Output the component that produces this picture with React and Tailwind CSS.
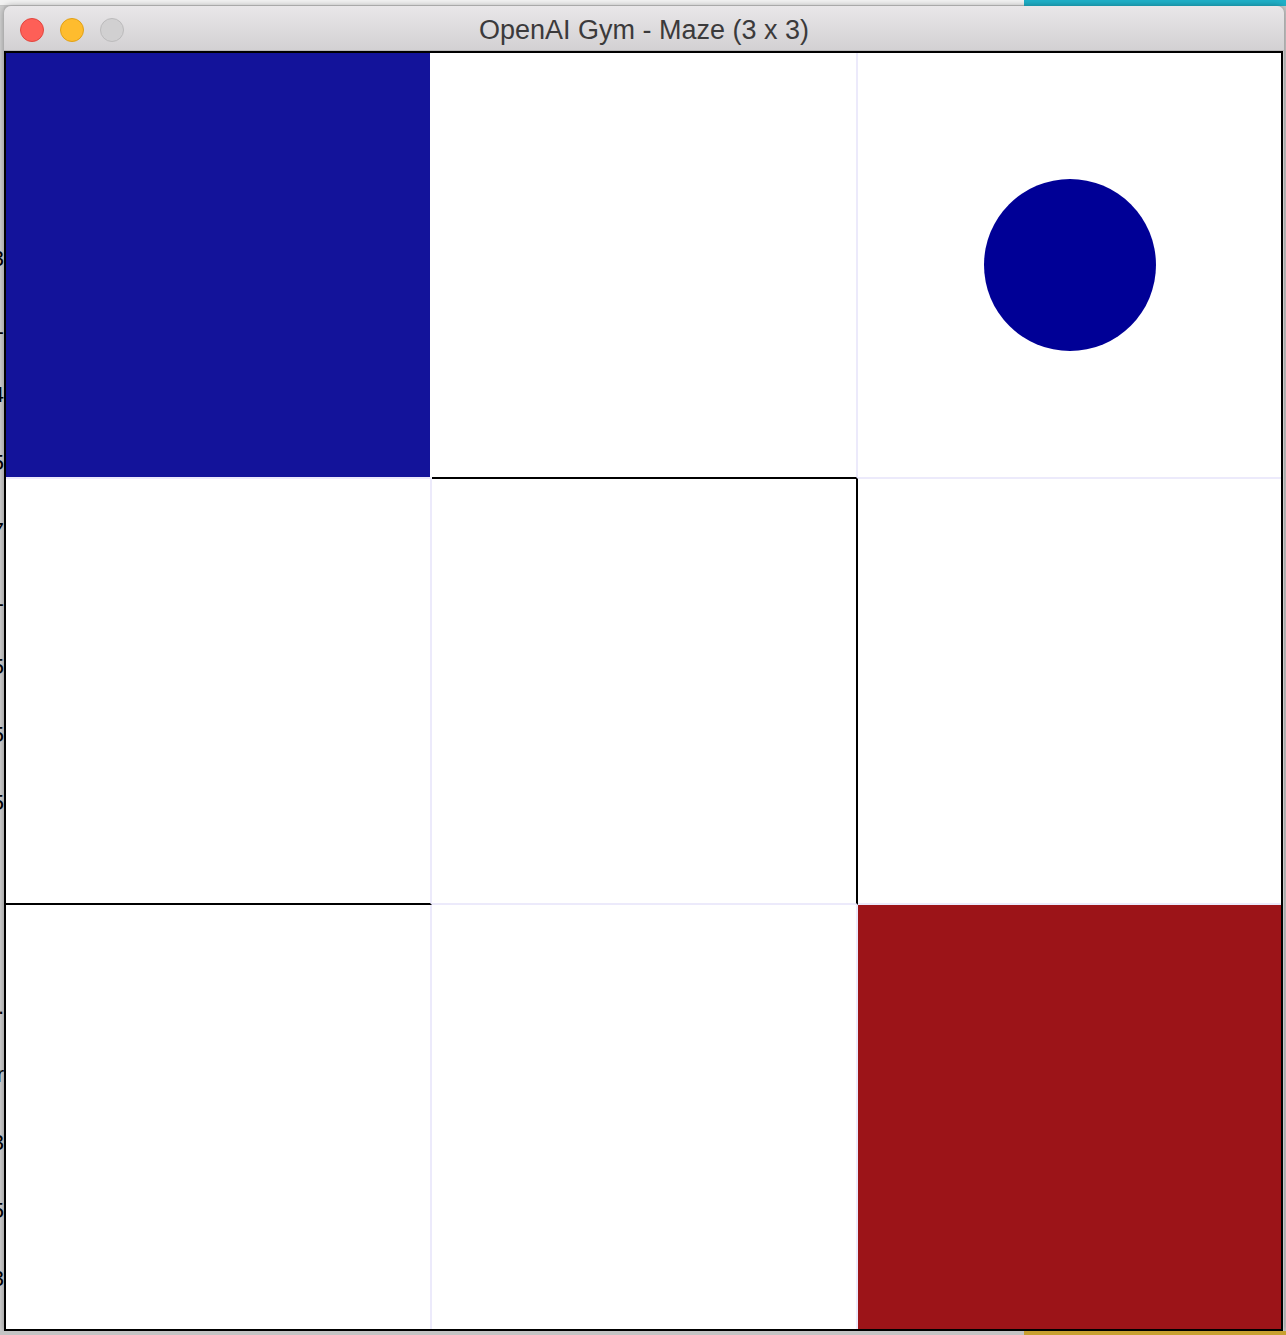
import React from "react";

// maze cells, row by row; border-b / border-r are the cell lines, black ones are walls
const cells = [
  { bg: "bg-[#13139a]", cls: "border-r-2 border-r-white border-b-2 border-b-[#eceafb]" },
  { bg: "bg-white", cls: "border-r-2 border-r-[#eceafb] border-b-2 border-b-black" },
  { bg: "bg-white", cls: "border-b-2 border-b-[#eceafb]", dot: true },
  { bg: "bg-white", cls: "border-r-2 border-r-[#eceafb] border-b-2 border-b-black" },
  { bg: "bg-white", cls: "border-r-2 border-r-black border-b-2 border-b-[#eceafb]" },
  { bg: "bg-white", cls: "border-b-2 border-b-[#eceafb]" },
  { bg: "bg-white", cls: "border-r-2 border-r-[#eceafb]" },
  { bg: "bg-white", cls: "border-r-2 border-r-[#eceafb]" },
  { bg: "bg-[#9c1418]", cls: "" },
];

const sideDigits = ["", "", "3", "1", "4", "5", "7", "1", "5", "5", "5", "", "", ".", "r", "3", "5", "3"];

export default function App() {
  return (
    <div className="w-[1286px] h-[1335px] bg-[#c9c9c9] flex flex-col overflow-hidden" style={{ fontFamily: "'Liberation Sans', Arial, sans-serif" }}>
      {/* desktop strip above the window */}
      <div className="h-[6px] flex shrink-0">
        <div className="w-[1024px] bg-[#f2f2f2] border-b border-[#c8c8c8]" />
        <div className="flex-1 bg-[#1fb0c8]" />
      </div>

      <div className="flex flex-1">
        {/* sliver of the window behind */}
        <div className="w-[4px] overflow-hidden bg-[#cfcfcf] flex flex-col pt-[105px] gap-[45px]">
          {sideDigits.map((d, i) => (
            <div key={i} className="flex justify-end h-[23px]">
              <span className="shrink-0 text-[22px] leading-[23px] text-black">{d}</span>
            </div>
          ))}
        </div>

        {/* maze window */}
        <div className="w-[1280px] flex flex-col shadow-[0_0_6px_rgba(0,0,0,0.35)] rounded-t-[7px] overflow-hidden">
          <div className="h-[45px] shrink-0 bg-gradient-to-b from-[#e9e7e9] to-[#d3d1d3] border-b border-[#b9b8b9] flex items-center pt-[3px] relative">
            <div className="flex gap-[16px] pl-[16px]">
              <span className="w-[24px] h-[24px] rounded-full bg-[#fe5f57] border border-[#e2463f]" />
              <span className="w-[24px] h-[24px] rounded-full bg-[#febc2e] border border-[#e1a116]" />
              <span className="w-[24px] h-[24px] rounded-full bg-[#d1d0d1] border border-[#bcbbbc]" />
            </div>
            <div className="absolute inset-0 flex items-center justify-center pt-[4px] text-[27px] text-[#3b3a3b]" style={{ fontFamily: "'Helvetica Neue', 'Liberation Sans', Arial, sans-serif" }}>
              OpenAI Gym - Maze (3 x 3)
            </div>
          </div>

          <div className="w-[1279px] border-2 border-black bg-white grid grid-cols-[426px_426px_423px] grid-rows-[426px_426px_424px]">
            {cells.map((c, i) => (
              <div key={i} className={`${c.bg} ${c.cls} flex items-center justify-center`}>
                {c.dot && <div className="w-[172px] h-[172px] rounded-full bg-[#000096]" />}
              </div>
            ))}
          </div>
        </div>
      </div>

      <div className="h-[4px] flex shrink-0">
        <div className="w-[1024px] bg-[#c4c4c4]" />
        <div className="flex-1 bg-[#c8a030]" />
      </div>
    </div>
  );
}
